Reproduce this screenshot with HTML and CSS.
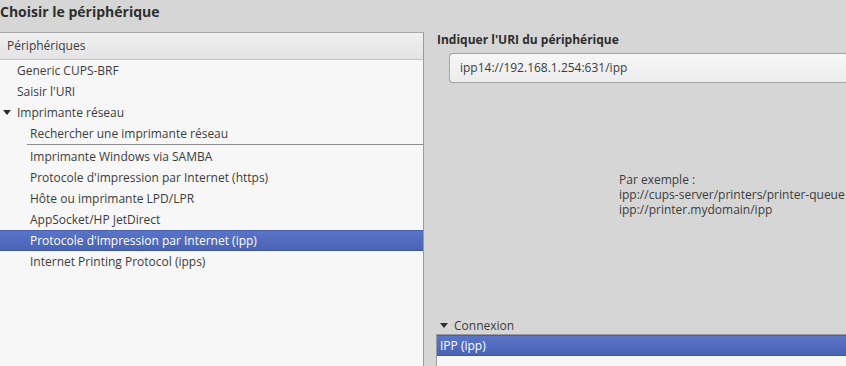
FILE: index.html
```html
<!DOCTYPE html>
<html>
<head>
    <meta charset="UTF-8" />
    <link rel="stylesheet" href="styles.css">
</head>
<body>
    <h1 class="titre">Choisir le périphérique</h1>

    <div class="dialogue">
        <div class="peripheriques">
            <div class="entete">Périphériques</div>
            <div class="ligne niv1">Generic CUPS-BRF</div>
            <div class="ligne niv1">Saisir l'URI</div>
            <div class="ligne groupe"><span class="fleche"></span>Imprimante réseau</div>
            <div class="ligne niv2">Rechercher une imprimante réseau</div>
            <div class="separateur"></div>
            <div class="ligne niv2">Imprimante Windows via SAMBA</div>
            <div class="ligne niv2">Protocole d'impression par Internet (https)</div>
            <div class="ligne niv2">Hôte ou imprimante LPD/LPR</div>
            <div class="ligne niv2">AppSocket/HP JetDirect</div>
            <div class="ligne niv2 choisi">Protocole d'impression par Internet (ipp)</div>
            <div class="ligne niv2">Internet Printing Protocol (ipps)</div>
        </div>

        <div class="details">
            <h2 class="etiquette">Indiquer l'URI du périphérique</h2>
            <div class="saisie">ipp14://192.168.1.254:631/ipp</div>

            <div class="exemple">
                <div>Par exemple :</div>
                <div>ipp://cups-server/printers/printer-queue</div>
                <div>ipp://printer.mydomain/ipp</div>
            </div>

            <div class="connexion">
                <div class="connexion-titre"><span class="fleche"></span>Connexion</div>
                <div class="liste">
                    <div class="ligne choisi">IPP (ipp)</div>
                </div>
            </div>
        </div>
    </div>
</body>
</html>
```

FILE: styles.css
```css
body {
    font-family: 'Open Sans', 'Noto Sans', sans-serif;
    font-size: 12px;
    margin: 0;
    background-color: #d6d6d6;
    color: #3c3c3c;
    height: 366px;
    overflow: hidden;
}
.titre {
    font-size: 14px;
    font-weight: bold;
    color: #2e2e2e;
    margin: 0;
    height: 32px;
    line-height: 24px;
}
.dialogue {
    display: flex;
    height: 334px;
}
.peripheriques {
    width: 423px;
    background-color: #f7f7f7;
    border-top: 1px solid #a8a8a8;
    border-right: 1px solid #9a9a9a;
}
.entete {
    height: 26px;
    line-height: 25px;
    padding-left: 7px;
    background: linear-gradient(#f0f0f0, #e4e4e4);
    border-bottom: 1px solid #c2c2c2;
}
.ligne {
    height: 21px;
    line-height: 21px;
    white-space: nowrap;
}
.niv1 {
    padding-left: 17px;
}
.niv2 {
    padding-left: 30px;
}
.groupe {
    padding-left: 3px;
}
.fleche {
    display: inline-block;
    width: 0;
    height: 0;
    border-left: 4px solid transparent;
    border-right: 4px solid transparent;
    border-top: 5px solid #2e2e2e;
    margin-right: 6px;
    vertical-align: 2px;
}
.separateur {
    height: 1px;
    margin-left: 27px;
    border-top: 1px solid #8c8c8c;
}
.choisi {
    background: linear-gradient(#5a74c8, #4a63b4);
    color: #ffffff;
    border-top: 1px solid #4660ad;
    border-bottom: 1px solid #3f579f;
    height: 19px;
    line-height: 19px;
}
.details {
    flex: 1;
    padding-left: 13px;
    display: flex;
    flex-direction: column;
}
.etiquette {
    font-size: 12px;
    font-weight: bold;
    color: #2e2e2e;
    margin: 0;
    height: 21px;
    line-height: 16px;
}
.saisie {
    margin-left: 12px;
    height: 28px;
    line-height: 28px;
    padding-left: 10px;
    border: 1px solid #a6a6a6;
    border-right: none;
    border-radius: 4px 0 0 4px;
    background: linear-gradient(#f7f7f7, #ececec);
    color: #3c3c3c;
}
.exemple {
    margin-top: 89px;
    margin-left: 182px;
    line-height: 15px;
}
.exemple div {
    height: 15px;
    overflow: visible;
}
.connexion {
    margin-top: auto;
}
.connexion-titre {
    padding-left: 3px;
    height: 18px;
    line-height: 20px;
}
.liste {
    height: 31px;
    margin-left: -1px;
    background-color: #f7f7f7;
    border-top: 1px solid #9a9a9a;
    border-left: 1px solid #9a9a9a;
}
.liste .ligne {
    padding-left: 3px;
}
```
